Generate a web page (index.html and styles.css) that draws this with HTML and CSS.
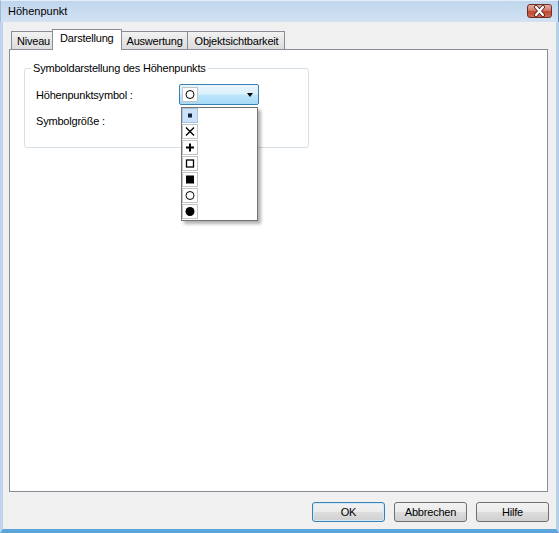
FILE: index.html
```html
<!DOCTYPE html>
<html lang="de">
<head>
<meta charset="utf-8">
<title>Höhenpunkt</title>
<link rel="stylesheet" href="styles.css">
</head>
<body>
<div class="window">
  <div class="titlebar">
    <span class="title">Höhenpunkt</span>
    <span class="close">
      <svg width="23" height="12" viewBox="0 0 23 12">
        <path d="M8 2 L15 10 M15 2 L8 10" stroke="#5a2a24" stroke-width="4" stroke-linecap="round"/>
        <path d="M8 2 L15 10 M15 2 L8 10" stroke="#ffffff" stroke-width="2.2" stroke-linecap="round"/>
      </svg>
    </span>
  </div>
  <div class="frame">
    <div class="tabs">
      <div class="tab">Niveau</div>
      <div class="tab active">Darstellung</div>
      <div class="tab">Auswertung</div>
      <div class="tab">Objektsichtbarkeit</div>
    </div>
    <div class="panel">
      <fieldset class="group">
        <legend class="group-title">Symboldarstellung des Höhenpunkts</legend>
        <div class="row">
          <span class="label">Höhenpunktsymbol :</span>
          <div class="combo">
            <div class="combo-box">
              <span class="sym">
                <svg width="14" height="13" viewBox="0 0 14 13"><circle cx="7" cy="6.5" r="4" fill="none" stroke="#000" stroke-width="1"/></svg>
              </span>
              <span class="arrow"></span>
            </div>
            <ul class="list">
              <li class="item"><span class="sym selected"><svg width="14" height="13" viewBox="0 0 14 13"><rect x="5" y="4.5" width="4" height="4" fill="#15233f"/></svg></span></li>
              <li class="item"><span class="sym"><svg width="14" height="13" viewBox="0 0 14 13"><path d="M3 2.5 L11 10.5 M11 2.5 L3 10.5" stroke="#000" stroke-width="1.4"/></svg></span></li>
              <li class="item"><span class="sym"><svg width="14" height="13" viewBox="0 0 14 13"><path d="M7 2.5 V10.5 M3 6.5 H11" stroke="#000" stroke-width="2"/></svg></span></li>
              <li class="item"><span class="sym"><svg width="14" height="13" viewBox="0 0 14 13"><rect x="3.5" y="3" width="7" height="7" fill="none" stroke="#000" stroke-width="1.3"/></svg></span></li>
              <li class="item"><span class="sym"><svg width="14" height="13" viewBox="0 0 14 13"><rect x="3" y="2.5" width="8" height="8" fill="#000"/></svg></span></li>
              <li class="item"><span class="sym"><svg width="14" height="13" viewBox="0 0 14 13"><circle cx="7" cy="6.5" r="4" fill="none" stroke="#000" stroke-width="1"/></svg></span></li>
              <li class="item"><span class="sym"><svg width="14" height="13" viewBox="0 0 14 13"><circle cx="7" cy="6.5" r="4.5" fill="#000"/></svg></span></li>
            </ul>
          </div>
        </div>
        <div class="row">
          <span class="label">Symbolgröße :</span>
        </div>
      </fieldset>
    </div>
    <div class="buttons">
      <button class="btn default">OK</button>
      <button class="btn">Abbrechen</button>
      <button class="btn">Hilfe</button>
    </div>
  </div>
</div>
</body>
</html>
```

FILE: styles.css
```css
* { box-sizing: border-box; }

html, body {
  margin: 0;
  padding: 0;
}

body {
  width: 559px;
  height: 533px;
  overflow: hidden;
  font-family: "Liberation Sans", Arial, sans-serif;
  font-size: 11px;
  color: #000;
  background: #f0f0f0;
}

.window {
  width: 559px;
  height: 533px;
  display: flex;
  flex-direction: column;
}

.titlebar {
  height: 22px;
  flex: none;
  display: flex;
  align-items: center;
  justify-content: space-between;
  padding: 0 6px 1px 7px;
  background: linear-gradient(#c0d6ed, #d3e2f2);
  border-top: 1px solid #e4eef8;
  border-left: 1px solid #9eb9d6;
  border-right: 1px solid #5f7d9c;
}

.title {
  font-size: 11px;
  letter-spacing: 0;
}

.close {
  width: 25px;
  height: 14px;
  display: flex;
  align-items: center;
  justify-content: center;
  border: 1px solid #6b2f27;
  border-radius: 3px;
  background: linear-gradient(#e7b0a4 0%, #d47a68 45%, #c0462f 55%, #cf6b52 100%);
}

.frame {
  flex: 1;
  display: flex;
  flex-direction: column;
  padding: 7px 7px 7px 6px;
  border-left: 3px solid #bdd4ec;
  border-right: 3px solid #b7d0ea;
  border-bottom: 4px solid #58a6dc;
  background: #f0f0f0;
  letter-spacing: -0.2px;
}

.tabs {
  display: flex;
  align-items: flex-end;
  height: 21px;
  margin-bottom: -1px;
  margin-right: 1px;
  padding-left: 2px;
  position: relative;
  z-index: 1;
}

.tab {
  height: 18px;
  padding: 3px 4px 0 5px;
  border: 1px solid #898c95;
  border-bottom: none;
  background: linear-gradient(#f2f2f2, #dcdcdc);
  margin-right: -1px;
  line-height: 13px;
  white-space: nowrap;
  margin-bottom: 1px;
}

.tab:last-child {
  padding: 3px 6px 0 7px;
}

.tab.active {
  height: 21px;
  margin: 0 -1px 0 -2px;
  padding: 2px 7px 0 7px;
  background: #fff;
  position: relative;
  z-index: 2;
}

.panel {
  flex: 1;
  background: #fff;
  border: 1px solid #898c95;
  margin-right: 1px;
  padding: 12px 0 0 14px;
}

.group {
  width: 285px;
  margin: 0;
  padding: 9px 10px 16px 11px;
  border: 1px solid #d5dfe5;
  border-radius: 3px;
  display: flex;
  flex-direction: column;
  gap: 5px;
}

.group-title {
  padding: 0 2px;
  margin-left: -5px;
  line-height: 13px;
}

.row {
  display: flex;
  align-items: center;
  height: 21px;
}

.label {
  width: 143px;
  flex: none;
}

.combo {
  position: relative;
  width: 80px;
  height: 21px;
}

.combo-box {
  height: 21px;
  display: flex;
  align-items: center;
  justify-content: space-between;
  padding: 0 5px 0 2px;
  border: 1px solid #3c7fb1;
  border-radius: 2px;
  background: linear-gradient(#eaf6fd 0%, #d9f0fc 48%, #bee6fd 52%, #a7d9f5 100%);
}

.combo-box .sym {
  background: #fff;
}

.arrow {
  width: 0;
  height: 0;
  border-left: 3.5px solid transparent;
  border-right: 3.5px solid transparent;
  border-top: 4px solid #000;
  margin-top: 1px;
}

.sym {
  width: 16px;
  height: 15px;
  display: flex;
  align-items: center;
  justify-content: center;
  border: 1px solid #c4c4c4;
  background: #fff;
}

.sym.selected {
  background: #cbe2f8;
  border-color: #a9c3de;
}

.list {
  position: absolute;
  left: 2px;
  top: 23px;
  width: 77px;
  margin: 0;
  padding: 0;
  list-style: none;
  background: #fff;
  border: 1px solid #737373;
  box-shadow: 3px 3px 3px rgba(0, 0, 0, 0.3);
}

.item {
  height: 16px;
}

.buttons {
  flex: none;
  display: flex;
  justify-content: flex-end;
  gap: 9px;
  margin-top: 10px;
}

.btn {
  width: 73px;
  height: 20px;
  padding: 0;
  font-family: "Liberation Sans", Arial, sans-serif;
  font-size: 11px;
  letter-spacing: -0.2px;
  color: #000;
  border: 1px solid #707070;
  border-radius: 3px;
  background: linear-gradient(#f2f2f2 0%, #ebebeb 48%, #dddddd 52%, #cfcfcf 100%);
}

.btn.default {
  border-color: #3c7fb1;
  box-shadow: inset 0 0 0 1px #cfeaf9;
}
```
